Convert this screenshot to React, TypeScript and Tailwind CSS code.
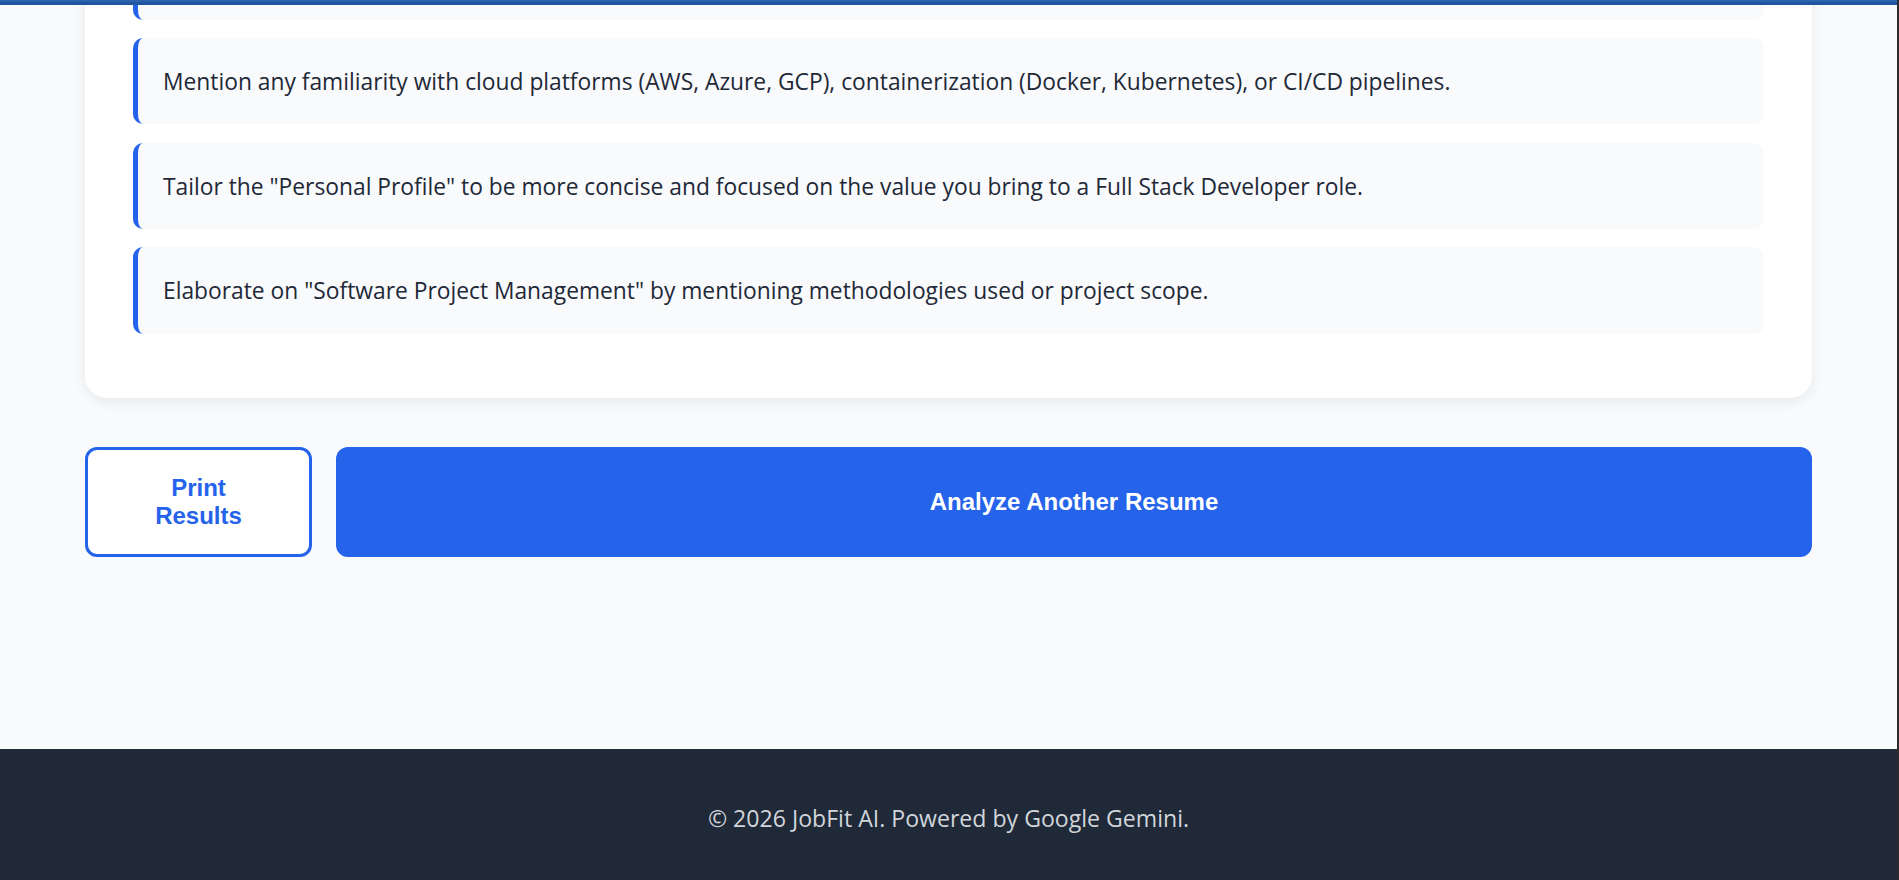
import React from "react";

const tips = [
  "Add quantifiable achievements to each role to demonstrate measurable impact.",
  "Mention any familiarity with cloud platforms (AWS, Azure, GCP), containerization (Docker, Kubernetes), or CI/CD pipelines.",
  'Tailor the "Personal Profile" to be more concise and focused on the value you bring to a Full Stack Developer role.',
  'Elaborate on "Software Project Management" by mentioning methodologies used or project scope.',
];

export default function App() {
  return (
    <div className="flex min-h-screen bg-[#f8fafc]">
      <div className="flex-1 flex flex-col min-w-0">
        <div className="sticky top-0 z-10 h-[5px] bg-[#1d55a0] border-t-[2px] border-[#2b62ab]" />
        <main className="flex-1 mt-[-72px] px-[85px] pb-[192px]">
          <div className="bg-white rounded-[22px] shadow-[0_4px_14px_rgba(0,0,0,0.07)] px-[48px] pb-[64px]">
            <div className="flex flex-col gap-[18.3px]">
              {tips.map((t, i) => (
                <div
                  key={i}
                  className="bg-[#f8fafc] border-l-[5px] border-[#2563eb] rounded-[10px] pl-[25px] pr-[25px] pt-[26px] pb-[24px] text-[22.8px] leading-[36.5px] text-[#1f2937] whitespace-nowrap overflow-hidden"
                  style={{ fontFamily: '"Open Sans", "Noto Sans", sans-serif' }}
                >
                  {t}
                </div>
              ))}
            </div>
          </div>
          <div className="flex gap-[24px] mt-[49px]" style={{ fontFamily: '"Liberation Sans", Arial, sans-serif' }}>
            <button className="w-[227px] h-[110px] shrink-0 border-[3px] border-[#2563eb] rounded-[12px] bg-white text-[#2563eb] font-bold text-[24px] leading-[27.6px] px-[45px]">
              Print Results
            </button>
            <button className="flex-1 h-[110px] rounded-[12px] bg-[#2563eb] text-white font-bold text-[24px] leading-[27.6px]">
              Analyze Another Resume
            </button>
          </div>
        </main>
        <footer
          className="bg-[#1f2937] pt-[51px] pb-[50px] text-center text-[23.1px] leading-[36px] text-[#d1d5db]"
          style={{ fontFamily: '"Open Sans", "Noto Sans", sans-serif' }}
        >
          © 2026 JobFit AI. Powered by Google Gemini.
        </footer>
      </div>
      <div className="w-[2px] bg-[#2b2b2b] shrink-0" />
    </div>
  );
}
